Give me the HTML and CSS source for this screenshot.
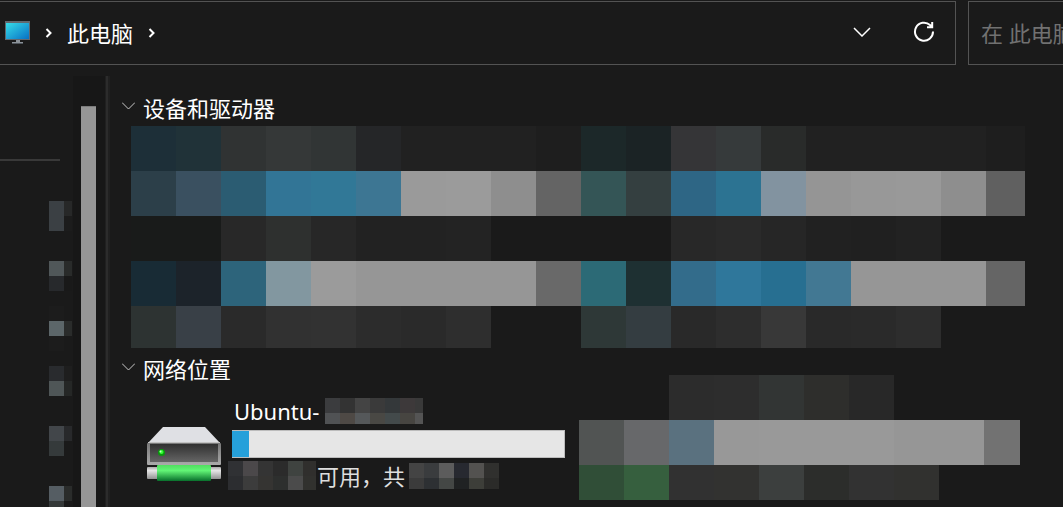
FILE: index.html
```html
<!DOCTYPE html>
<html lang="zh-CN">
<head>
<meta charset="utf-8">
<meta name="viewport" content="width=device-width, initial-scale=1">
<title>此电脑</title>
<link rel="stylesheet" href="styles.css">
</head>
<body>
<header class="toolbar">
  <nav class="address" aria-label="地址栏">
    <svg class="pc-icon" viewBox="0 0 25 23" width="25" height="23" aria-hidden="true">
      <defs>
        <linearGradient id="screen" x1="0" y1="0" x2="1" y2="1">
          <stop offset="0" stop-color="#36dce8"/><stop offset="1" stop-color="#0870c4"/>
        </linearGradient>
      </defs>
      <path fill="#62676d" d="M0 0h25v19H0z"/>
      <path fill="url(#screen)" d="M1 2h23v16H1z"/>
      <path fill="#8b9299" d="M11 19h4v2h3v1H7v-1h4z"/>
      <path fill="#50565c" d="M7 22h11v1H7z"/>
    </svg>
    <svg class="crumb-arrow" viewBox="0 0 7 10" width="7" height="10" aria-hidden="true"><path d="M1.500 1 5.500 5 1.500 9"/></svg>
    <button class="crumb" type="button">此电脑</button>
    <svg class="crumb-arrow" viewBox="0 0 7 10" width="7" height="10" aria-hidden="true"><path d="M1.500 1 5.500 5 1.500 9"/></svg>
    <button class="icon-button history" type="button" aria-label="以前的位置">
      <svg viewBox="0 0 18 10" width="18" height="10"><path d="M1 1l8 8 8-8"/></svg>
    </button>
    <button class="icon-button" type="button" aria-label="刷新">
      <svg viewBox="0 0 22 22" width="22" height="22"><path d="M20 10.500a9 9 0 1 1-3-6.500l2 2M19.200 1v5.200h-5.200"/></svg>
    </button>
  </nav>
  <input class="search" type="text" aria-label="搜索" placeholder="在 此电脑 中搜索">
</header>
<div class="body">
  <aside class="sidebar">
    <hr class="divider">
    <svg class="mosaic side-mosaic" data-mosaic="side" role="img" aria-label="导航项"></svg>
  </aside>
  <div class="scrollbar"><div class="thumb"></div></div>
  <div class="splitter"></div>
  <main class="content">
    <section>
      <h2 class="group"><svg viewBox="0 0 13 8" width="13" height="8" aria-hidden="true"><path d="M0 .5l6.500 6.500L13 .5"/></svg>设备和驱动器</h2>
      <svg class="mosaic drives" data-mosaic="drives" role="img" aria-label="驱动器"></svg>
    </section>
    <section class="network">
      <div class="network-main">
        <h2 class="group"><svg viewBox="0 0 13 8" width="13" height="8" aria-hidden="true"><path d="M0 .5l6.500 6.500L13 .5"/></svg>网络位置</h2>
        <article class="drive">
          <svg class="drive-icon" viewBox="0 0 74 56" width="74" height="56" aria-hidden="true">
            <defs>
              <linearGradient id="case" x1="0" y1="0" x2="0" y2="1"><stop offset="0" stop-color="#303030"/><stop offset="1" stop-color="#656565"/></linearGradient>
              <linearGradient id="rim" x1="0" y1="0" x2="0" y2="1"><stop offset="0" stop-color="#777"/><stop offset="1" stop-color="#aaa"/></linearGradient>
              <linearGradient id="pipe" x1="0" y1="0" x2="0" y2="1"><stop offset="0" stop-color="#aaa"/><stop offset=".3" stop-color="#e6e6e6"/><stop offset="1" stop-color="#929292"/></linearGradient>
              <linearGradient id="green" x1="0" y1="0" x2="0" y2="1"><stop offset="0" stop-color="#51de60"/><stop offset=".35" stop-color="#62f576"/><stop offset="1" stop-color="#08702c"/></linearGradient>
            </defs>
            <path fill="#dfe0e4" d="M16 0h42l15 16H1z"/>
            <rect y="16" width="74" height="22" rx="1" fill="url(#rim)"/>
            <path fill="url(#case)" d="M3 17h68v18H3z"/>
            <path fill="#c2c2c2" d="M1 15h72v1H1z"/>
            <circle cx="14.500" cy="25.500" r="3.500" fill="#079b0b"/>
            <circle cx="14.500" cy="25" r="2" fill="#35ff35"/>
            <circle cx="13.500" cy="24.500" r="1" fill="#c5ffc5"/>
            <rect y="40" width="74" height="12" rx="1" fill="url(#pipe)"/>
            <rect x="10" y="38" width="54" height="16" rx="1" fill="url(#green)"/>
          </svg>
          <div class="drive-info">
            <div class="drive-name"><span>Ubuntu-</span><svg class="mosaic" data-mosaic="name" role="img" aria-label="名称"></svg></div>
            <progress class="usage" max="100" value="5" aria-label="已用空间"></progress>
            <div class="drive-space"><svg class="mosaic" data-mosaic="free" role="img" aria-label="可用空间"></svg><span>可用，共</span><svg class="mosaic total" data-mosaic="total" role="img" aria-label="总空间"></svg></div>
          </div>
        </article>
      </div>
      <svg class="mosaic network-tile" data-mosaic="tile" role="img" aria-label="网络驱动器"></svg>
    </section>
  </main>
</div>
<script src="mosaic.js"></script>
</body>
</html>
```
FILE: styles.css
```css
* { box-sizing: border-box; }
body {
  margin: 0;
  height: 100vh;
  display: flex;
  flex-direction: column;
  overflow: hidden;
  background: #1a1a1a;
  color: #fff;
  font: 22px/32px "Noto Sans", "Noto Sans CJK SC", sans-serif;
}
svg { display: block; flex: none; }
button, input { font: inherit; color: inherit; background: none; border: 0; padding: 0; margin: 0; }

.toolbar { display: flex; gap: 12px; padding-top: 1px; height: 65px; flex: none; }
.address {
  flex: 1;
  display: flex;
  align-items: center;
  padding: 0 20px 0 5px;
  border: 1px solid #535353;
  border-left: 0;
}
.pc-icon { margin-right: 15px; margin-bottom: 2px; }
.crumb-arrow, .icon-button svg, .group svg { fill: none; stroke: #fff; }
.crumb-arrow { stroke-width: 2; }
.crumb { margin: 0 15px; white-space: nowrap; }
.icon-button { display: flex; }
.icon-button svg { stroke-width: 2; margin-bottom: 2px; }
.history { margin-left: auto; margin-right: 42px; }
.history svg { stroke-width: 1.5; }
.search {
  width: 95px;
  padding-left: 12px;
  border: 1px solid #535353;
  border-right: 0;
  border-radius: 0;
  outline: 0;
}
.search::placeholder { color: #717171; opacity: 1; }

.body { flex: 1; min-height: 0; display: flex; padding-top: 11px; }
.sidebar { width: 73px; flex: none; padding-top: 83px; }
.divider { width: 60px; height: 2px; margin: 0 0 40px; border: 0; background: #393939; }
.side-mosaic { margin-left: 49px; }
.scrollbar { width: 32px; flex: none; padding: 30px 9px 0 8px; background: #171717; }
.thumb { height: 100%; background: #969696; border-top: 1px solid #7c7c7c; }
.splitter { width: 5px; flex: none; background: #2c2c2c; border: solid #202020; border-width: 0 2px 0 1px; }

.content { flex: 1; min-width: 0; padding-top: 16px; }
.group { display: flex; align-items: center; gap: 8px; margin: 0; padding-left: 12px; font-size: 22px; font-weight: 400; }
.group svg { stroke: #c8c8c8; margin-bottom: 4px; }
.drives { margin: 2px 0 0 21px; }
.network { display: flex; align-items: flex-start; }
.network-main { width: 469px; flex: none; padding-top: 5px; }
.network-tile { margin-top: 27px; }
.drive { display: flex; padding: 13px 14px 0 37px; }
.drive-icon { margin: 29px 7px 0 0; }
.drive-info { flex: 1; }
.drive-name { display: flex; align-items: center; height: 26px; padding-left: 6px; gap: 6px; }
.usage {
  display: block;
  width: calc(100% - 4px);
  height: 28px;
  margin: 6px 0 3px 4px;
  appearance: none;
  border: 1px solid #bcbcbc;
  border-left: 0;
  background: #e6e6e6;
}
.usage::-webkit-progress-bar { background: #e6e6e6; }
.usage::-webkit-progress-value { background: #26a0da; }
.drive-space { display: flex; align-items: center; height: 29px; color: #dedede; }
.drive-space span { margin-left: 1px; white-space: nowrap; }
.total { margin-left: 4px; }
```
FILE: mosaic.js
```js
// Each mosaic: cell size, overall size, and rows of colours ("-" leaves a cell empty).
const mosaics = {
  drives: { cell: 45, width: 894, height: 222, rows: [
    "1d2f38 203238 303333 353838 313535 252628 212121 212121 212121 1e1e1e 1c2829 1b2325 353537 363a3b 292b2a 212121 212121 212121 212121 1e1e1e",
    "2c3f49 3a5060 2b5c72 327596 317897 3d7693 9a9a9a 9b9b9b 8e8e8e 646464 345556 343f40 2e6685 2c7392 8293a0 959595 989898 999999 8e8e8e 606060",
    "191b1a 191b1a 282828 2e302f 272727 222222 222222 232323 - - - - 282828 2a2a2a 262626 212121 202020 222222 - -",
    "182b35 1c232a 2d647b 8297a0 9b9b9b 969696 969696 969696 969696 696969 2c6a76 1e3032 336c8b 2f779b 276f91 427893 969696 969696 969696 656565",
    "2d3332 394047 2a2a2a 313131 323232 2c2c2c 2a2a2a 2e2e2e - - 2e3837 343d41 292929 2d2d2d 383838 292929 2a2a2a 2d2d2d - -" ] },
  tile: { cell: 45, width: 441, height: 125, rows: [
    "- - 2c2c2c 2d2d2d 323534 2e2e2c 282828 - - -",
    "515453 67686a 5a717f 989898 999999 999999 999999 969696 969696 727272",
    "304e37 365f3e 313131 323230 3c3f3e 2c2d2b 323232 31312f - -" ] },
  side: { cell: 15, width: 23, height: 306, rows: [
    "3b4044 272828", "3b4044 1c1c1c", "- -", "- -", "505759 292b2a", "27292c 191919", "- -", "1c1c1c -",
    "5c6669 2a2c2b", "1c1c1c -", "- -", "292b2e 1e1e1e", "4f5657 252726", "- -", "- -", "42464a 28292b",
    "353a3b -", "- -", "- -", "555d63 2a2c2b", "353939 -" ] },
  name: { cell: 15, width: 98, height: 26, rows: [
    "3b3c3e 333333 444444 3a3a3a 34383a 3d393a 393939",
    "505254 4e4945 55585a 494844 434a4b 474541 545454" ] },
  free: { cell: 15, width: 88, height: 29, rows: [
    "303134 4b484a 343434 2b2b2b 3f4340 302f2d",
    "2c2d30 3c3c3c 353432 2d2f2e 4b4b4b 31312e" ] },
  total: { cell: 15, width: 90, height: 26, rows: [
    "444444 3a3c3e 5c5c5c 272930 535250 30302e",
    "3b3b3b 2d3033 444745 202223 3d3e39 2b2b29" ] }
};

document.querySelectorAll("[data-mosaic]").forEach(svg => {
  const { cell, width, height, rows } = mosaics[svg.dataset.mosaic];
  svg.setAttribute("width", width);
  svg.setAttribute("height", height);
  rows.forEach((row, y) => row.split(" ").forEach((color, x) => {
    if (color === "-") return;
    const rect = document.createElementNS("http://www.w3.org/2000/svg", "rect");
    const attrs = { x: x * cell, y: y * cell, width: cell, height: cell, fill: "#" + color };
    for (const key in attrs) rect.setAttribute(key, attrs[key]);
    svg.append(rect);
  }));
});
```
